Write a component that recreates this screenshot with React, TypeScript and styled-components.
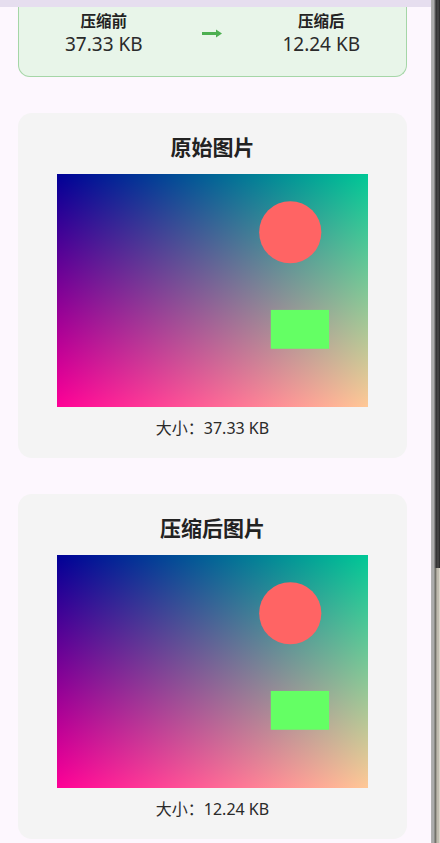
import React from "react";
import styled, { createGlobalStyle } from "styled-components";

const GlobalStyle = createGlobalStyle`
  html, body {
    margin: 0;
    padding: 0;
    background: #fdf7fe;
  }
  body {
    font-family: "Noto Sans", "Noto Sans CJK SC", sans-serif;
    color: #222;
  }
`;

const Screen = styled.div`
  display: flex;
  width: 440px;
  height: 843px;
  overflow: hidden;
`;

const Main = styled.div`
  flex: 1;
  display: flex;
  flex-direction: column;
  background: #fdf7fe;
  min-width: 0;
`;

const TopBar = styled.div`
  height: 7px;
  flex: 0 0 7px;
  background: #e6deef;
`;

const Content = styled.div`
  display: flex;
  flex-direction: column;
  gap: 36px;
  padding: 0 24px 0 18px;
`;

const SummaryCard = styled.div`
  display: flex;
  align-items: center;
  justify-content: space-around;
  padding: 2px 16px 19px;
  background: #e8f5e9;
  border: 1px solid #a5d6a7;
  border-top: none;
  border-radius: 0 0 12px 12px;
`;

const Stat = styled.div`
  display: flex;
  flex-direction: column;
  align-items: center;
`;

const StatLabel = styled.div`
  font-family: "Noto Sans CJK SC", sans-serif;
  font-size: 15.5px;
  font-weight: 700;
  line-height: 22px;
  color: #222;
`;

const StatValue = styled.div`
  font-family: "Noto Sans", "Noto Sans CJK SC", sans-serif;
  font-size: 19px;
  line-height: 26px;
  color: #2a2a2a;
`;

const Arrow = styled.svg`
  display: block;
  width: 20px;
  height: 9px;
  margin-top: 1px;
`;

const ImageCard = styled.section`
  display: flex;
  flex-direction: column;
  align-items: center;
  padding: 20px 0 20px;
  background: #f4f4f4;
  border-radius: 14px;
`;

const CardTitle = styled.h2`
  margin: 0 0 15px;
  font-family: "Noto Sans CJK SC", sans-serif;
  font-size: 21px;
  font-weight: 700;
  line-height: 26px;
  color: #222;
`;

const Picture = styled.svg`
  display: block;
  width: 311px;
  height: 233px;
`;

const Caption = styled.div`
  margin-top: 11px;
  font-family: "Noto Sans", "Noto Sans CJK SC", sans-serif;
  font-size: 16px;
  line-height: 20px;
  color: #2a2a2a;
`;

const Frame = styled.div`
  flex: 0 0 9px;
  display: flex;
  flex-direction: column;
`;

const FrameUpper = styled.div`
  flex: 0 0 568px;
  background: linear-gradient(
    to right,
    #c4c4c4 0,
    #9c9c9c 1px,
    #b8b8b8 2px,
    #a0a0a0 3px,
    #6a6a6a 4px,
    #3a3a3a 5px,
    #2f2f2f 6px,
    #555 7px,
    #2c2c2c 8px
  );
`;

const FrameLower = styled.div`
  flex: 1;
  background: linear-gradient(
    to right,
    #c4c4c4 0,
    #9c9c9c 1px,
    #b8b8b8 2px,
    #a0a0a0 3px,
    #7a7a72 4px,
    #6c6a62 5px,
    #d6d1c4 6px,
    #a8a498 7px,
    #d8d4c7 8px
  );
`;

function SampleImage({ id }: { id: string }) {
  return (
    <Picture viewBox="0 0 400 300" preserveAspectRatio="none">
      <defs>
        <linearGradient id={`${id}-h`} x1="0" y1="0" x2="1" y2="0">
          <stop offset="0" stopColor="rgb(0,0,150)" />
          <stop offset="1" stopColor="rgb(0,200,150)" />
        </linearGradient>
        <linearGradient id={`${id}-v`} x1="0" y1="0" x2="0" y2="1">
          <stop offset="0" stopColor="rgb(0,0,0)" />
          <stop offset="1" stopColor="rgb(255,0,0)" />
        </linearGradient>
      </defs>
      <g style={{ isolation: "isolate" }}>
        <rect x="0" y="0" width="400" height="300" fill={`url(#${id}-h)`} />
        <rect
          x="0"
          y="0"
          width="400"
          height="300"
          fill={`url(#${id}-v)`}
          style={{ mixBlendMode: "screen" }}
        />
      </g>
      <circle cx="300" cy="75" r="40" fill="#ff6464" />
      <rect x="275" y="175" width="75" height="50" fill="#64ff64" />
    </Picture>
  );
}

export default function App() {
  return (
    <>
      <GlobalStyle />
      <Screen>
        <Main>
          <TopBar />
          <Content>
            <SummaryCard>
              <Stat>
                <StatLabel>压缩前</StatLabel>
                <StatValue>37.33 KB</StatValue>
              </Stat>
              <Arrow viewBox="0 0 20 9">
                <rect x="0" y="3" width="15" height="3" fill="#4caf50" />
                <polygon points="14,0.5 20,4.5 14,8.5" fill="#4caf50" />
              </Arrow>
              <Stat>
                <StatLabel>压缩后</StatLabel>
                <StatValue>12.24 KB</StatValue>
              </Stat>
            </SummaryCard>

            <ImageCard>
              <CardTitle>原始图片</CardTitle>
              <SampleImage id="orig" />
              <Caption>大小：37.33 KB</Caption>
            </ImageCard>

            <ImageCard>
              <CardTitle>压缩后图片</CardTitle>
              <SampleImage id="comp" />
              <Caption>大小：12.24 KB</Caption>
            </ImageCard>
          </Content>
        </Main>
        <Frame>
          <FrameUpper />
          <FrameLower />
        </Frame>
      </Screen>
    </>
  );
}
